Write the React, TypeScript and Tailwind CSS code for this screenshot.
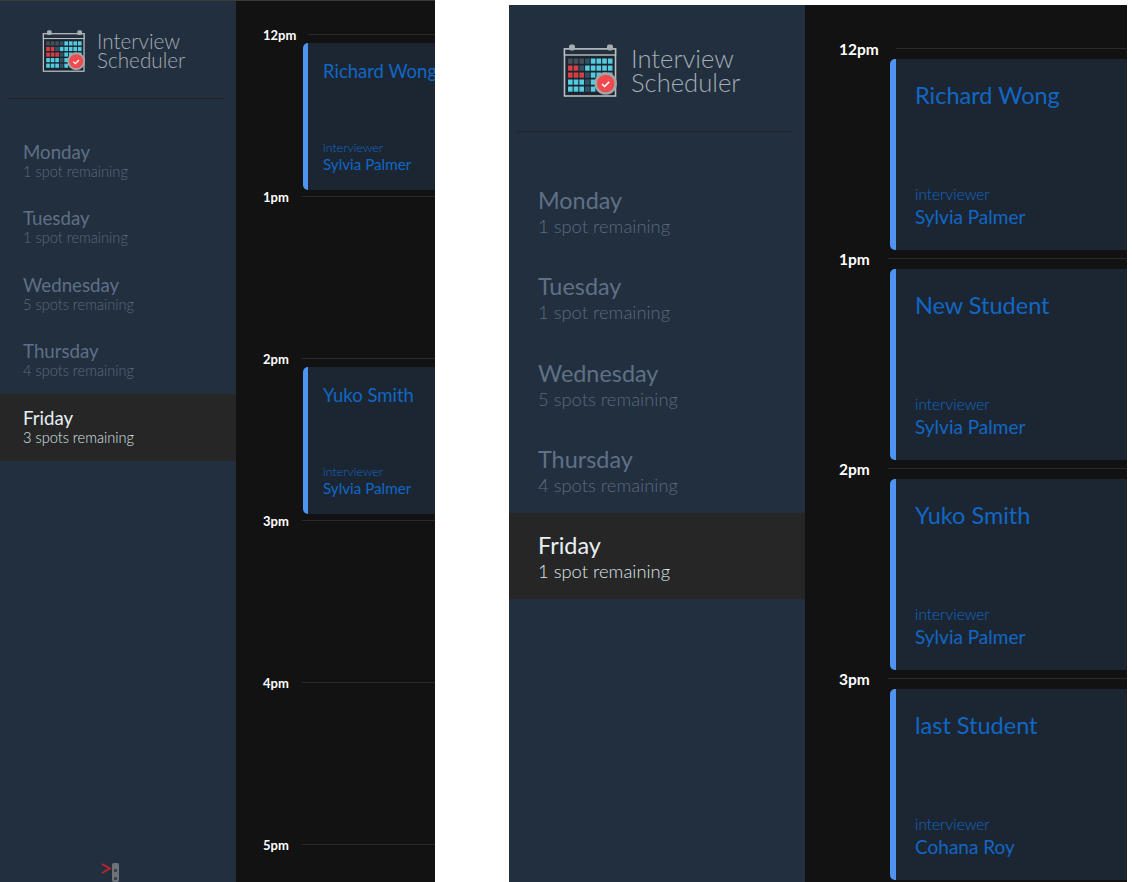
const FONT = "font-['Lato','Noto_Sans',sans-serif]"

const small = {
  panel: 'w-[435px] h-[882px] border-t border-[#3a3a3a]',
  sidebar: 'w-[236px]',
  logoRow: 'h-[97px] pl-[42px] pt-[2px] gap-[10px]',
  logo: 'w-[45px] h-[43px]',
  logoText: 'text-[20.7px] leading-[19px]',
  divider: 'ml-[8px] w-[217px]',
  days: 'mt-[29px]',
  day: 'h-[66.5px] pl-[23px] pt-[12.5px]',
  dayName: 'text-[18.7px] leading-[22px]',
  daySub: 'text-[14.6px] leading-[18px]',
  schedule: 'pl-[27px] pt-[33px]',
  label: 'text-[13px] w-[39px] pt-[2px]',
  firstLine: 'ml-[6px]',
  slot: 'h-[162px]',
  card: 'mt-[8px] h-[147px] border-l-[5px] pl-[15px] pt-[15px] pb-[16px]',
  wrap: 'ml-[40px]',
  name: 'text-[18.5px] leading-[26px]',
  role: 'text-[12.4px] leading-[13px]',
  person: 'text-[15.2px] leading-[20px]',
}

const large = {
  panel: 'w-[618px] h-[877px]',
  sidebar: 'w-[296px]',
  logoRow: 'h-[126px] pl-[54px] pt-[3px] gap-[12px]',
  logo: 'w-[56px] h-[54px]',
  logoText: 'text-[25.6px] leading-[24px]',
  divider: 'ml-[8px] w-[275px]',
  days: 'mt-[36px]',
  day: 'h-[86.25px] pl-[29px] pt-[18px]',
  dayName: 'text-[23.4px] leading-[29px]',
  daySub: 'text-[18.4px] leading-[22px]',
  schedule: 'pl-[34px] pt-[43px]',
  label: 'text-[15.5px] w-[49px] pt-[2px]',
  firstLine: 'ml-[8px]',
  slot: 'h-[210px]',
  card: 'mt-[10px] h-[191px] border-l-[6px] pl-[19px] pt-[20px] pb-[21px]',
  wrap: 'ml-[51px]',
  name: 'text-[23.5px] leading-[33px]',
  role: 'text-[15.4px] leading-[20px]',
  person: 'text-[19px] leading-[25px]',
}

type Sizes = typeof small
type Slot = { time: string; name?: string; person?: string }

const cellColors = [
  'ddd.cccc',
  'rr.ccccc',
  'rrr.cccc',
  'ccc.cc..',
  'ccc.c...',
]

const Logo = ({ className }: { className: string }) => {
  const fill: Record<string, string> = { d: '#46505c', r: '#d43f42', c: '#55cbdf', '.': '#2f5264' }
  return (
    <svg viewBox="4 4 56 54" className={className}>
      <rect x="5.5" y="10" width="51" height="47" fill="#1b2530" stroke="#b9bec1" strokeWidth="1.6" />
      <rect x="5.5" y="10" width="51" height="6" fill="#222f3e" stroke="#b9bec1" strokeWidth="1.4" />
      <rect x="10" y="5.5" width="6" height="6" rx="2" fill="#a8adb0" />
      <rect x="48" y="5.5" width="6" height="6" rx="2" fill="#a8adb0" />
      {cellColors.map((row, y) =>
        row.split('').map((c, x) => (
          <rect key={`${x}-${y}`} x={9 + x * 5.7} y={19.5 + y * 7} width="4.6" height="5.2" fill={fill[c]} />
        ))
      )}
      <circle cx="46.7" cy="44.5" r="10" fill="#ef4b4f" stroke="#a3a6a8" strokeWidth="2.4" />
      <path d="M43 45l2.6 2.5 4.6-4.6" fill="none" stroke="#fff" strokeWidth="1.6" />
    </svg>
  )
}

const Day = ({ s, name, spots, selected }: { s: Sizes; name: string; spots: string; selected?: boolean }) => (
  <div className={`${s.day} ${selected ? 'bg-[#262626] text-[#e6f0f5]' : 'text-[#5f7087]'}`}>
    <p className={s.dayName}>{name}</p>
    <p className={`${s.daySub} font-light ${selected ? 'text-[#dbe5ea]' : 'text-[#5a6a7f]'}`}>{spots}</p>
  </div>
)

const Appointment = ({ s, slot, first }: { s: Sizes; slot: Slot; first?: boolean }) => (
  <div className={s.slot}>
    <div className="flex items-center h-px">
      <span className={`${s.label} shrink-0 font-bold text-white`}>{slot.time}</span>
      <div className={`${first ? s.firstLine : ''} flex-1 h-px bg-[#2a2a2a]`} />
    </div>
    {slot.name && (
      <div className={`${s.wrap} ${s.card} flex flex-col justify-between w-[400px] rounded-l-[5px] border-[#4f94f0] bg-[#1c2633] text-[#1167c4] whitespace-nowrap`}>
        <p className={s.name}>{slot.name}</p>
        <div>
          <p className={`${s.role} font-light`}>interviewer</p>
          <p className={s.person}>{slot.person}</p>
        </div>
      </div>
    )}
  </div>
)

const Panel = ({ s, spots, slots, cursor }: { s: Sizes; spots: string[]; slots: Slot[]; cursor?: boolean }) => {
  const names = ['Monday', 'Tuesday', 'Wednesday', 'Thursday', 'Friday']
  return (
    <div className={`${s.panel} flex shrink-0 overflow-hidden bg-[#121212]`}>
      <aside className={`${s.sidebar} shrink-0 flex flex-col bg-[#222f3e]`}>
        <div className={`${s.logoRow} flex items-center`}>
          <Logo className={s.logo} />
          <p className={`${s.logoText} font-light text-[#a3adb5]`}>Interview<br />Scheduler</p>
        </div>
        <div className={`${s.divider} h-px bg-[#1f2327]`} />
        <div className={s.days}>
          {names.map((n, i) => (
            <Day key={n} s={s} name={n} spots={spots[i]} selected={n === 'Friday'} />
          ))}
        </div>
        {cursor && (
          <div className="mt-auto flex justify-center pr-[14px]">
            <svg viewBox="0 0 20 20" className="w-[20px] h-[20px]">
              <path d="M1 2l8 4.5L1 11" fill="none" stroke="#c9232a" strokeWidth="1.6" />
              <rect x="11" y="1" width="7" height="19" rx="2" fill="#6d7378" />
              <rect x="13" y="7" width="3" height="3" fill="#3a4148" />
              <rect x="13" y="15" width="3" height="3" fill="#3a4148" />
            </svg>
          </div>
        )}
      </aside>
      <main className={`${s.schedule} flex-1 overflow-hidden`}>
        {slots.map((slot, i) => (
          <Appointment key={slot.time} s={s} slot={slot} first={i === 0} />
        ))}
      </main>
    </div>
  )
}

export default function App() {
  return (
    <div className={`${FONT} w-[1132px] h-[882px] flex overflow-hidden bg-white`}>
      <Panel
        s={small}
        cursor
        spots={['1 spot remaining', '1 spot remaining', '5 spots remaining', '4 spots remaining', '3 spots remaining']}
        slots={[
          { time: '12pm', name: 'Richard Wong', person: 'Sylvia Palmer' },
          { time: '1pm' },
          { time: '2pm', name: 'Yuko Smith', person: 'Sylvia Palmer' },
          { time: '3pm' },
          { time: '4pm' },
          { time: '5pm' },
        ]}
      />
      <div className="w-[74px] shrink-0" />
      <div className="pt-[5px]">
        <Panel
          s={large}
          spots={['1 spot remaining', '1 spot remaining', '5 spots remaining', '4 spots remaining', '1 spot remaining']}
          slots={[
            { time: '12pm', name: 'Richard Wong', person: 'Sylvia Palmer' },
            { time: '1pm', name: 'New Student', person: 'Sylvia Palmer' },
            { time: '2pm', name: 'Yuko Smith', person: 'Sylvia Palmer' },
            { time: '3pm', name: 'last Student', person: 'Cohana Roy' },
          ]}
        />
      </div>
    </div>
  )
}
